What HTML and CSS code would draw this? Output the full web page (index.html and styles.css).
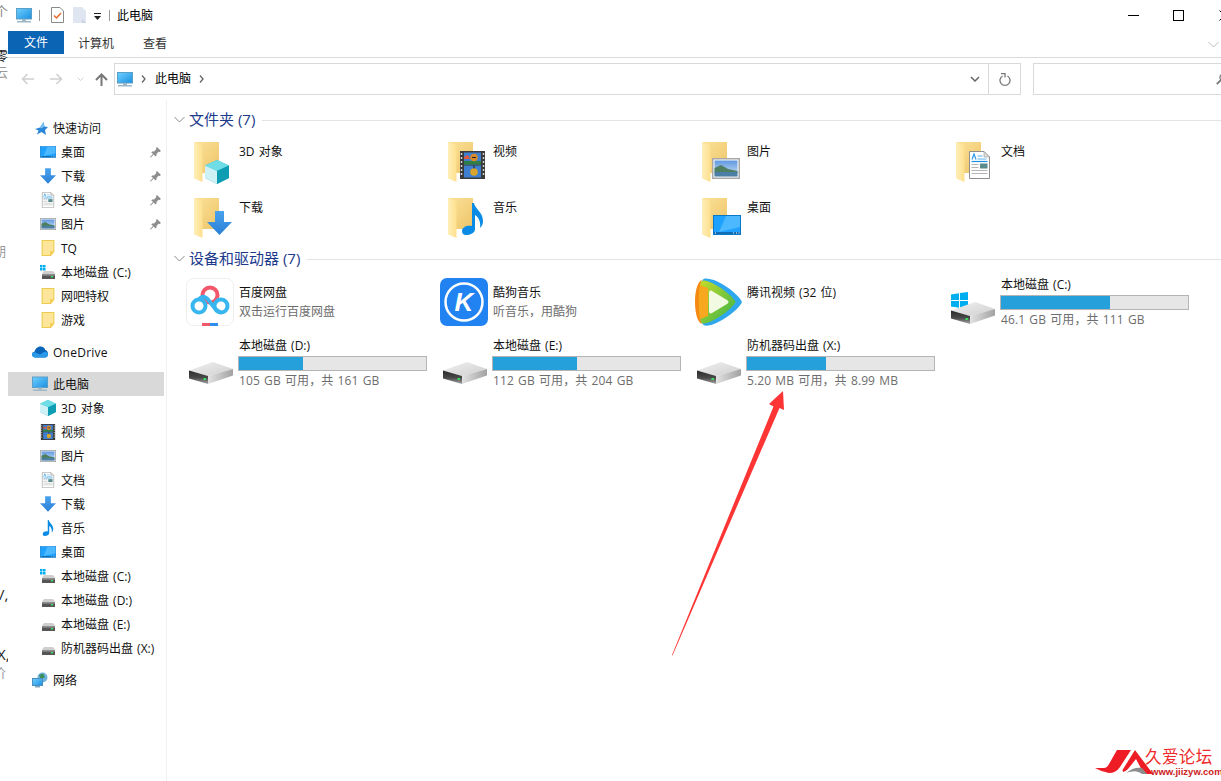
FILE: index.html
```html
<!DOCTYPE html>
<html lang="zh-CN">
<head>
<meta charset="utf-8">
<title>此电脑</title>
<link rel="stylesheet" href="styles.css">
</head>
<body>
<svg class="defs" aria-hidden="true">
  <defs>
    <linearGradient id="gFolder" x1="0" y1="0" x2="1" y2="1"><stop offset="0" stop-color="#fbe29a"/><stop offset="1" stop-color="#eec468"/></linearGradient>
    <linearGradient id="gFront" x1="0" y1="0" x2="1" y2="0"><stop offset="0" stop-color="#ffeeb8"/><stop offset="1" stop-color="#fde08e"/></linearGradient>
    <linearGradient id="gArrow" x1="0" y1="0" x2="0" y2="1"><stop offset="0" stop-color="#4aa3ee"/><stop offset="1" stop-color="#2a7fd6"/></linearGradient>
    <linearGradient id="gDriveTop" x1="0" y1="0" x2="1" y2="1"><stop offset="0" stop-color="#f0f0f0"/><stop offset="1" stop-color="#cfcfcf"/></linearGradient>
    <linearGradient id="gDriveSide" x1="0" y1="0" x2="1" y2="0"><stop offset="0" stop-color="#e2e2e2"/><stop offset="1" stop-color="#a2a2a2"/></linearGradient>
    <linearGradient id="gDriveFront" x1="0" y1="0" x2="0" y2="1"><stop offset="0" stop-color="#2a2a2a"/><stop offset=".55" stop-color="#4a4a4a"/><stop offset="1" stop-color="#a8a8a8"/></linearGradient>
    <linearGradient id="gScreen" x1="0" y1="0" x2="1" y2="1"><stop offset="0" stop-color="#6fd0ff"/><stop offset="1" stop-color="#1c8fe0"/></linearGradient>
    <linearGradient id="gSky" x1="0" y1="0" x2="0" y2="1"><stop offset="0" stop-color="#5f98e0"/><stop offset="1" stop-color="#cfe2f3"/></linearGradient>
    <linearGradient id="gTvGreen" x1="0" y1="0" x2="1" y2="1"><stop offset="0" stop-color="#c5dc2a"/><stop offset="1" stop-color="#36b24a"/></linearGradient>

    <symbol id="folder" viewBox="0 0 26 40">
      <path d="M0 0H25V31H8Z" fill="url(#gFolder)"/>
      <path d="M0 0L8.500 3V40L0 36.500Z" fill="url(#gFront)"/>
    </symbol>
    <symbol id="folder-s" viewBox="0 0 12 15">
      <path d="M.5.500H11.500V11L8.500 14.500H.5Z" fill="#fde59a" stroke="#eecb4c"/>
      <path d="M8.500 14.500V11H11.500" fill="#fbd35f" stroke="#eecb4c"/>
    </symbol>
    <symbol id="desktop" viewBox="0 0 28 20">
      <rect x=".5" y=".5" width="27" height="19" fill="#1ea1ff" stroke="#0a78c8"/>
      <path d="M13 1H27V12L6 17Z" fill="#4cb8ff"/>
      <rect x="1" y="17" width="26" height="2" fill="#0f6db5"/>
      <path d="M2 18h1M20 18h1M23 18h1M25.500 18h1" stroke="#fff" stroke-width="1"/>
    </symbol>
    <symbol id="down" viewBox="0 0 25 24">
      <path d="M8 0H17V11H25L12.500 24L0 11H8Z" fill="url(#gArrow)"/>
    </symbol>
    <symbol id="doc" viewBox="0 0 21 28">
      <path d="M.5.500H15L20.500 6V27.500H.5Z" fill="#fff" stroke="#8e8e8e"/>
      <path d="M15 .5V6H20.500Z" fill="#dcdcdc" stroke="#9a9a9a" stroke-width=".6"/>
      <path d="M3 8.500L5 3L7 8.500" fill="none" stroke="#2f9be4" stroke-width="1.200"/>
      <path d="M8.500 5h5M8.500 8h9" stroke="#55b0ec"/>
      <path d="M2.500 10.500h16" stroke="#1d8fdf" stroke-width="1.200"/>
      <path d="M2.500 13.500h7M2.500 16.500h7M2.500 19.500h16M2.500 22.500h16" stroke="#b5b5b5"/>
      <rect x="11" y="12.500" width="7.500" height="5" fill="#5b8a8a"/>
    </symbol>
    <symbol id="pic" viewBox="0 0 28 21">
      <rect x=".75" y=".75" width="26.500" height="19.500" fill="#fff" stroke="#a8a8a8" stroke-width="1.500"/>
      <rect x="2.500" y="2.500" width="23" height="16" fill="url(#gSky)"/>
      <path d="M2.500 10L9 7L16 11L25.500 13V15H2.500Z" fill="#4f7f62"/>
      <rect x="2.500" y="14" width="23" height="4.500" fill="#4c7fa6"/>
    </symbol>
    <symbol id="cube" viewBox="0 0 24 24">
      <path d="M12 0L24 5.500V18L12 24L0 18V5.500Z" fill="#27b6c9"/>
      <path d="M0 5.500L12 0L24 5.500L12 11Z" fill="#6fdde6"/>
      <path d="M0 5.500L12 11V24L0 18Z" fill="#cdf1f4"/>
      <path d="M12 11L24 5.500V18L12 24Z" fill="#0f9db4"/>
    </symbol>
    <symbol id="film" viewBox="0 0 25 28">
      <rect width="25" height="28" fill="#3a3a3a"/>
      <rect x="4" y="1.500" width="17" height="12" fill="#3e7fd0"/>
      <rect x="4" y="14.500" width="17" height="12" fill="#3e7fd0"/>
      <path d="M4 10h17v3.500H4Z" fill="#2f7f45"/>
      <circle cx="14" cy="6.500" r="3.800" fill="#d98a2a"/>
      <circle cx="14" cy="21" r="3.800" fill="#d9a52a"/>
      <path d="M12 6.500h4M14 14.500v3" stroke="#222"/>
      <path d="M4 6L8 4L10 8H4Z" fill="#e25a3a"/>
      <path d="M1.500 2v24M23.500 2v24" stroke="#cfcfcf" stroke-width="1.500" stroke-dasharray="2 2"/>
    </symbol>
    <symbol id="note" viewBox="0 0 21 32">
      <path d="M10 0H12C13 6 21 9 21 18C21 21 20 23 18 25C19 20 17 14 13 12V26C13 30 8 32 4 32C1 32 0 30 0 28C0 24 5 22 10 23Z" fill="#0a8be6"/>
    </symbol>
    <symbol id="drive" viewBox="0 0 44 22">
      <path d="M0 8.500L24 0L44 7L19 14Z" fill="url(#gDriveTop)"/>
      <path d="M19 14L44 7V13.500L19 22Z" fill="url(#gDriveSide)"/>
      <path d="M0 8.500L19 14V22L0 16.500Z" fill="url(#gDriveFront)"/>
      <rect x="14.500" y="16" width="2.500" height="2" fill="#35e05a"/>
    </symbol>
    <symbol id="win" viewBox="0 0 17 17">
      <path d="M0 2.500L8 1.200V8H0ZM9 1L17 0V8H9ZM0 9H8V15.800L0 14.500ZM9 9H17V17L9 16Z" fill="#00aeef"/>
    </symbol>
    <symbol id="drive-s" viewBox="0 0 16 16">
      <path d="M2 9.500L4 7H13L15 9.500V11H2Z" fill="#cfcfcf"/>
      <rect x="2" y="10.500" width="13" height="4.500" fill="#555"/>
      <rect x="2" y="10.500" width="13" height="1.200" fill="#8d8d8d"/>
      <rect x="11" y="12" width="2" height="1.500" fill="#3fe060"/>
    </symbol>
    <symbol id="win-drive-s" viewBox="0 0 16 16">
      <use href="#drive-s" width="16" height="16"/>
      <path d="M0 1h2.500v2.500H0ZM3 1h2.500v2.500H3ZM0 4h2.500v2.500H0ZM3 4h2.500v2.500H3Z" fill="#00aeef"/>
    </symbol>
    <symbol id="star" viewBox="0 0 13 13">
      <path d="M8.500 0L9.500 4.500L13 5L10 8L11 13L6.500 10L2 12.500L3.500 8.500L0 7L5 5.500Z" fill="#2a86d8"/>
      <path d="M8.500 0L9.500 4.500L6 6.500L5 5.500Z" fill="#7cc0f2"/>
    </symbol>
    <symbol id="cloud" viewBox="0 0 16 11">
      <path d="M3.500 11C1 11 0 9.500 0 8C0 6.500 1 5.500 2.500 5.300C3 2.500 5.500 0 8.500 0C11 0 12.800 1.500 13.300 3.500C15 4 16 5.500 16 7.500C16 9.500 14.800 11 13 11Z" fill="#0a64b8"/>
      <path d="M3.500 11C1 11 0 9.500 0 8C0 6.500 1.500 5.500 3.500 6L8 8L12 5.500C14 5 16 6 16 8C16 10 14.800 11 13 11Z" fill="#2a9ae8"/>
    </symbol>
    <symbol id="pc" viewBox="0 0 16 15">
      <rect x=".5" y=".5" width="15" height="10.500" fill="url(#gScreen)" stroke="#5a9fc8"/>
      <rect x="6" y="11" width="4" height="2" fill="#9ab8c8"/>
      <rect x="1" y="13" width="14" height="1.500" fill="#9fb8c6"/>
    </symbol>
    <symbol id="network" viewBox="0 0 16 16">
      <circle cx="10.500" cy="5.500" r="5" fill="#6fb4e0"/>
      <path d="M7 3L11 1.500L13 5L9 8Z" fill="#3c8f5a"/>
      <rect x=".5" y="6.500" width="10" height="7" fill="url(#gScreen)" stroke="#4a8fc0"/>
      <rect x="3" y="14" width="5" height="1.500" fill="#7fa8c0"/>
    </symbol>
    <symbol id="pin" viewBox="0 0 11 11">
      <path d="M7 0L11 4L9.500 5L8.500 4.700L6.500 7L6.500 8.500L5.500 9.500L3.800 7.500L.8 10.500L0 10L3 7L1.200 5.300L2.200 4.500L4 4.500L6.300 2.200L6 1Z" fill="#8d8d8d"/>
    </symbol>
  </defs>
</svg>

<div class="window">
  <div class="bleed">
    <span class="bleed-item b1">个</span>
    <span class="bleed-item b2">零</span>
    <span class="bleed-item b3">云</span>
    <span class="bleed-item b4">期</span>
    <span class="bleed-item b5">/,</span>
    <span class="bleed-item b6">X,</span>
    <span class="bleed-item b7">价</span>
  </div>

  <header class="titlebar">
    <svg class="qa qa-pc" width="16" height="15"><use href="#pc" width="16" height="15"/></svg>
    <i class="qa-sep"></i>
    <svg class="qa qa-check" width="13" height="16" viewBox="0 0 13 16">
      <path d="M.5.500H9L12.500 4V15.500H.5Z" fill="#fff" stroke="#8a8a8a"/>
      <path d="M3 8.500L5.500 11L10 6" fill="none" stroke="#e8682a" stroke-width="1.500"/>
    </svg>
    <svg class="qa qa-blank" width="13" height="16" viewBox="0 0 13 16">
      <path d="M0 0H9L13 4V16H0Z" fill="#dfe6f2"/>
      <path d="M9 12V16H13Z" fill="#c8d2e2"/>
    </svg>
    <svg class="qa qa-drop" width="9" height="8" viewBox="0 0 9 8">
      <path d="M1 .5h7" stroke="#222"/>
      <path d="M1 3H8L4.500 7Z" fill="#222"/>
    </svg>
    <i class="qa-sep qa-sep2"></i>
    <span class="title-text">此电脑</span>
    <div class="win-controls">
      <svg class="wc wc-min" width="11" height="11"><path d="M0 5.500H11" stroke="#000"/></svg>
      <svg class="wc wc-max" width="11" height="11"><rect x=".5" y=".5" width="10" height="10" fill="none" stroke="#000"/></svg>
      <svg class="wc wc-close" width="11" height="11"><path d="M.5.500L10.500 10.500M10.500.500L.5 10.500" stroke="#000"/></svg>
    </div>
  </header>

  <nav class="tabs">
    <span class="tab tab-file">文件</span>
    <span class="tab tab-calc">计算机</span>
    <span class="tab tab-view">查看</span>
    <svg class="ribbon-toggle" width="11" height="7" viewBox="0 0 11 7"><path d="M.5 1L5.500 6L10.500 1" fill="none" stroke="#bdbdbd"/></svg>
  </nav>

  <div class="addressrow">
    <div class="navbtns">
      <svg class="nb nb-back" width="13" height="12" viewBox="0 0 13 12"><path d="M13 6H2M6.500 1L1.500 6L6.500 11" fill="none" stroke="#cfcfcf" stroke-width="1.500"/></svg>
      <svg class="nb nb-fwd" width="13" height="12" viewBox="0 0 13 12"><path d="M0 6H11M6.500 1L11.500 6L6.500 11" fill="none" stroke="#cfcfcf" stroke-width="1.500"/></svg>
      <svg class="nb nb-drop" width="7" height="5" viewBox="0 0 7 5"><path d="M.5.500L3.500 3.500L6.500.5" fill="none" stroke="#d0d0d0"/></svg>
      <svg class="nb nb-up" width="13" height="13" viewBox="0 0 13 13"><path d="M6.500 13V2M1 7L6.500 1.500L12 7" fill="none" stroke="#777" stroke-width="2"/></svg>
    </div>
    <div class="addr">
      <svg class="addr-pc" width="16" height="15"><use href="#pc" width="16" height="15"/></svg>
      <svg class="crumb" width="5" height="8" viewBox="0 0 5 8"><path d="M1 .5L4 4L1 7.500" fill="none" stroke="#666" stroke-width="1.300"/></svg>
      <span class="addr-text">此电脑</span>
      <svg class="crumb" width="5" height="8" viewBox="0 0 5 8"><path d="M1 .5L4 4L1 7.500" fill="none" stroke="#666" stroke-width="1.300"/></svg>
      <span class="addr-fill"></span>
      <svg class="addr-drop" width="10" height="6" viewBox="0 0 10 6"><path d="M1 1L5 5L9 1" fill="none" stroke="#666" stroke-width="1.500"/></svg>
      <span class="addr-refresh">
        <svg width="12" height="13" viewBox="0 0 12 13"><path d="M3.500 3A5 5 0 1 0 8.500 3" fill="none" stroke="#777" stroke-width="1.300"/><path d="M2 .5H6V4.500" fill="none" stroke="#777" stroke-width="1.300"/></svg>
      </span>
    </div>
    <div class="search">
      <svg width="12" height="12" viewBox="0 0 12 12"><circle cx="7.500" cy="4.500" r="3.500" fill="none" stroke="#777" stroke-width="1.300"/><path d="M5 7L.8 11.200" stroke="#777" stroke-width="1.800"/></svg>
    </div>
  </div>

  <div class="content">
    <aside class="sidebar">
      <div class="row l1"><svg class="ico"><use href="#star" x="3" y="2" width="13" height="13"/></svg><span>快速访问</span></div>
      <div class="row l2"><svg class="ico"><use href="#desktop" width="16" height="16"/></svg><span>桌面</span><svg class="pin"><use href="#pin" width="11" height="11"/></svg></div>
      <div class="row l2"><svg class="ico"><use href="#down" width="16" height="16"/></svg><span>下载</span><svg class="pin"><use href="#pin" width="11" height="11"/></svg></div>
      <div class="row l2"><svg class="ico"><use href="#doc" width="16" height="16"/></svg><span>文档</span><svg class="pin"><use href="#pin" width="11" height="11"/></svg></div>
      <div class="row l2"><svg class="ico"><use href="#pic" width="16" height="16"/></svg><span>图片</span><svg class="pin"><use href="#pin" width="11" height="11"/></svg></div>
      <div class="row l2"><svg class="ico"><use href="#folder-s" width="16" height="16"/></svg><span>TQ</span></div>
      <div class="row l2"><svg class="ico"><use href="#win-drive-s" width="16" height="16"/></svg><span>本地磁盘 (C:)</span></div>
      <div class="row l2"><svg class="ico"><use href="#folder-s" width="16" height="16"/></svg><span>网吧特权</span></div>
      <div class="row l2"><svg class="ico"><use href="#folder-s" width="16" height="16"/></svg><span>游戏</span></div>

      <div class="row l1 spaced"><svg class="ico"><use href="#cloud" width="16" height="16"/></svg><span class="wide">OneDrive</span></div>

      <div class="row l1 spaced selected"><svg class="ico"><use href="#pc" width="16" height="16"/></svg><span>此电脑</span></div>
      <div class="row l2"><svg class="ico"><use href="#cube" width="16" height="16"/></svg><span>3D 对象</span></div>
      <div class="row l2"><svg class="ico"><use href="#film" width="16" height="16"/></svg><span>视频</span></div>
      <div class="row l2"><svg class="ico"><use href="#pic" width="16" height="16"/></svg><span>图片</span></div>
      <div class="row l2"><svg class="ico"><use href="#doc" width="16" height="16"/></svg><span>文档</span></div>
      <div class="row l2"><svg class="ico"><use href="#down" width="16" height="16"/></svg><span>下载</span></div>
      <div class="row l2"><svg class="ico"><use href="#note" width="16" height="16"/></svg><span>音乐</span></div>
      <div class="row l2"><svg class="ico"><use href="#desktop" width="16" height="16"/></svg><span>桌面</span></div>
      <div class="row l2"><svg class="ico"><use href="#win-drive-s" width="16" height="16"/></svg><span>本地磁盘 (C:)</span></div>
      <div class="row l2"><svg class="ico"><use href="#drive-s" width="16" height="16"/></svg><span>本地磁盘 (D:)</span></div>
      <div class="row l2"><svg class="ico"><use href="#drive-s" width="16" height="16"/></svg><span>本地磁盘 (E:)</span></div>
      <div class="row l2"><svg class="ico"><use href="#drive-s" width="16" height="16"/></svg><span>防机器码出盘 (X:)</span></div>

      <div class="row l1 spaced"><svg class="ico"><use href="#network" width="16" height="16"/></svg><span>网络</span></div>
    </aside>

    <main class="main">
      <section class="group">
        <h2 class="group-head">
          <svg class="chev" width="11" height="7" viewBox="0 0 11 7"><path d="M.5 1L5.500 6L10.500 1" fill="none" stroke="#8a8a8a"/></svg>
          <span>文件夹 (7)</span><i class="head-line"></i>
        </h2>
        <div class="grid folders">
          <div class="tile"><svg class="big"><use href="#folder" x="8" y="5" width="26" height="40"/><use href="#cube" x="19" y="23" width="24" height="24"/></svg><div class="info"><div class="name">3D 对象</div></div></div>
          <div class="tile"><svg class="big"><use href="#folder" x="8" y="5" width="26" height="40"/><use href="#film" x="20" y="14" width="25" height="28"/></svg><div class="info"><div class="name">视频</div></div></div>
          <div class="tile"><svg class="big"><use href="#folder" x="8" y="5" width="26" height="40"/><use href="#pic" x="18" y="21" width="28" height="21"/></svg><div class="info"><div class="name">图片</div></div></div>
          <div class="tile"><svg class="big"><use href="#folder" x="8" y="5" width="26" height="40"/><use href="#doc" x="21" y="14" width="21" height="28"/></svg><div class="info"><div class="name">文档</div></div></div>
          <div class="tile"><svg class="big"><use href="#folder" x="8" y="5" width="26" height="40"/><use href="#down" x="21" y="18" width="25" height="24"/></svg><div class="info"><div class="name">下载</div></div></div>
          <div class="tile"><svg class="big"><use href="#folder" x="8" y="5" width="26" height="40"/><use href="#note" x="22" y="10" width="21" height="32"/></svg><div class="info"><div class="name">音乐</div></div></div>
          <div class="tile"><svg class="big"><use href="#folder" x="8" y="5" width="26" height="40"/><use href="#desktop" x="19" y="22" width="28" height="20"/></svg><div class="info"><div class="name">桌面</div></div></div>
        </div>
      </section>

      <section class="group">
        <h2 class="group-head">
          <svg class="chev" width="11" height="7" viewBox="0 0 11 7"><path d="M.5 1L5.500 6L10.500 1" fill="none" stroke="#8a8a8a"/></svg>
          <span>设备和驱动器 (7)</span><i class="head-line"></i>
        </h2>
        <div class="grid drives">
          <div class="tile">
            <svg class="app" viewBox="0 0 48 48">
              <rect x=".5" y=".5" width="47" height="47" rx="7" fill="#fff" stroke="#eeeeee"/>
              <circle cx="24" cy="17" r="7.500" fill="none" stroke="#f2586a" stroke-width="4"/>
              <circle cx="13" cy="28" r="6.500" fill="none" stroke="#37b6f0" stroke-width="4"/>
              <circle cx="35" cy="28" r="6.500" fill="none" stroke="#37b6f0" stroke-width="4"/>
              <path d="M13 21.500Q18 15 24 24Q30 33 35 34.500" fill="none" stroke="#37b6f0" stroke-width="4"/>
              <rect x="16" y="45" width="8" height="3" fill="#f2586a"/>
              <rect x="24" y="45" width="8" height="3" fill="#2f8cf0"/>
            </svg>
            <div class="info pad"><div class="name">百度网盘</div><div class="sub sub-app">双击运行百度网盘</div></div>
          </div>
          <div class="tile">
            <svg class="app" viewBox="0 0 48 48">
              <rect width="48" height="48" rx="7" fill="#2183f2"/>
              <circle cx="24" cy="24" r="18.500" fill="none" stroke="#fff" stroke-width="2.500"/>
              <text x="24" y="33" class="app-k">K</text>
            </svg>
            <div class="info pad"><div class="name">酷狗音乐</div><div class="sub sub-app">听音乐，用酷狗</div></div>
          </div>
          <div class="tile">
            <svg class="app" viewBox="0 0 48 48">
              <path d="M8 2C4 3 1 12 1 24S4 45 8 46C5 40 5 8 8 2Z" fill="#f58a12"/>
              <path d="M8 3C10-1 14 1 20 2C32 7 42 15 47 22C48 24 48 25 47 26C42 33 32 41 20 46C14 48 10 49 8 45C5 38 5 10 8 3Z" fill="#2fa7ee"/>
              <path d="M7 4C5 12 5 36 7 44C9 47 13 45 18 43C28 38 37 31 41 25C42 24 42 24 41 23C37 17 28 10 18 5C13 3 9 1 7 4Z" fill="url(#gTvGreen)"/>
              <path d="M6 7C4.500 14 4.500 34 6 41L14 38V10Z" fill="#f7a81e"/>
              <path d="M15 15C15 13 16 12 18 13L33 22C35 23 35 25 33 26L18 35C16 36 15 35 15 33Z" fill="#f3fae2"/>
            </svg>
            <div class="info pad"><div class="name">腾讯视频 (32 位)</div></div>
          </div>
          <div class="tile">
            <svg class="big"><use href="#win" x="3" y="16" width="17" height="17"/><use href="#drive" x="3" y="26" width="44" height="22"/></svg>
            <div class="info"><div class="name">本地磁盘 (C:)</div><div class="bar"><div class="fill" style="width:58.500%"></div></div><div class="sub">46.1 GB 可用，共 111 GB</div></div>
          </div>
          <div class="tile">
            <svg class="big"><use href="#drive" x="3" y="25" width="44" height="22"/></svg>
            <div class="info"><div class="name">本地磁盘 (D:)</div><div class="bar"><div class="fill" style="width:34%"></div></div><div class="sub">105 GB 可用，共 161 GB</div></div>
          </div>
          <div class="tile">
            <svg class="big"><use href="#drive" x="3" y="25" width="44" height="22"/></svg>
            <div class="info"><div class="name">本地磁盘 (E:)</div><div class="bar"><div class="fill" style="width:45%"></div></div><div class="sub">112 GB 可用，共 204 GB</div></div>
          </div>
          <div class="tile">
            <svg class="big"><use href="#drive" x="3" y="25" width="44" height="22"/></svg>
            <div class="info"><div class="name">防机器码出盘 (X:)</div><div class="bar"><div class="fill" style="width:42%"></div></div><div class="sub">5.20 MB 可用，共 8.99 MB</div></div>
          </div>
        </div>
      </section>
    </main>
  </div>

  <svg class="arrow" width="1221" height="781" viewBox="0 0 1221 781" aria-hidden="true">
    <path d="M783 391L784 410L779.500 408L672.500 655.500L672 655L773.500 406.500L769 404Z" fill="#fd3535"/>
  </svg>

  <div class="logo">
    <svg class="logo-mark" width="58" height="30" viewBox="0 0 58 30">
      <path d="M22 3H36L25 20Q21 26 14 26Q7 25 0 21H9Q12 21 14 17Z" fill="#ee1c25"/>
      <path d="M40 3L58 27H49L41 12L33 22Q30 25 28 25L27.500 23Z" fill="#ee1c25"/>
      <path d="M31 26C37 21 42 20 47 21L52 27H47C42 23 37 24 31 26Z" fill="#8c8c8c"/>
    </svg>
    <div class="logo-text">
      <div class="logo-cn">久爱论坛</div>
      <div class="logo-url">www.jiizyw.com</div>
    </div>
  </div>
</div>
</body>
</html>
```

FILE: styles.css
```css
* { box-sizing: border-box; }

html, body {
  margin: 0;
  padding: 0;
  background: #fff;
}

body {
  font-family: "Open Sans", "Noto Sans CJK SC", sans-serif;
  font-size: 12px;
  line-height: 16px;
  word-spacing: 1px;
  color: #000;
  overflow: hidden;
}

.defs { position: absolute; width: 0; height: 0; }

.window {
  position: relative;
  width: 1221px;
  height: 781px;
  overflow: hidden;
  display: flex;
  flex-direction: column;
  padding-left: 8px;
}

/* fragments of the window behind */
.bleed { position: absolute; left: 0; top: 0; width: 8px; height: 781px; overflow: hidden; }
.bleed-item { position: absolute; left: -5px; color: #222; font-size: 13px; }
.b1 { top: 3px; color: #888; }
.b2 { top: 47px; }
.b3 { top: 64px; color: #999; }
.b4 { top: 243px; color: #999; left: -7px; }
.b5 { top: 586px; left: -1px; font-size: 15px; }
.b6 { top: 646px; left: -3px; font-size: 15px; }
.b7 { top: 664px; color: #999; left: -7px; }

/* title bar */
.titlebar {
  height: 30px;
  flex: none;
  display: flex;
  align-items: center;
  padding-left: 8px;
}
.qa { flex: none; display: block; }
.qa-pc { margin-right: 7px; }
.qa-sep { width: 1px; height: 11px; background: #9a9a9a; flex: none; }
.qa-check { margin-left: 11px; }
.qa-blank { margin-left: 9px; }
.qa-drop { margin-left: 7px; margin-top: 3px; }
.qa-sep2 { margin-left: 7px; }
.title-text { margin-left: 7px; padding-top: 2px; }
.win-controls {
  margin-left: auto;
  display: flex;
  align-items: center;
  margin-right: -9px;
}
.wc { flex: none; display: block; }
.wc-min { margin-right: 34px; }
.wc-max { margin-right: 35px; }
.wc-close { margin-right: 0; }

/* tabs */
.tabs {
  height: 28px;
  flex: none;
  display: flex;
  align-items: flex-start;
  border-bottom: 1px solid #dadada;
  padding-top: 1px;
}
.tab { display: block; height: 23px; line-height: 26px; text-align: center; color: #333; }
.tab-file { width: 56px; background: #0b64b4; color: #fff; line-height: 24px; }
.tab-calc { width: 64px; }
.tab-view { width: 54px; }
.ribbon-toggle { margin-left: auto; margin-top: 10px; margin-right: 2px; }

/* address row */
.addressrow {
  height: 42px;
  flex: none;
  display: flex;
  align-items: flex-start;
  padding-top: 5px;
}
.navbtns {
  width: 106px;
  height: 32px;
  flex: none;
  display: flex;
  align-items: center;
  padding-left: 13px;
}
.nb { flex: none; display: block; }
.nb-fwd { margin-left: 16px; }
.nb-drop { margin-left: 14px; }
.nb-up { margin-left: 11px; }

.addr {
  width: 907px;
  height: 32px;
  flex: none;
  border: 1px solid #d9d9d9;
  display: flex;
  align-items: center;
  padding-left: 2px;
}
.addr-pc { flex: none; }
.crumb { flex: none; margin-left: 8px; }
.addr-text { margin-left: 9px; }
.addr-fill { flex: 1; }
.addr-drop { flex: none; margin-right: 8px; }
.addr-refresh {
  width: 32px;
  height: 30px;
  flex: none;
  border-left: 1px solid #d9d9d9;
  display: flex;
  align-items: center;
  justify-content: center;
}
.search {
  flex: none;
  width: 220px;
  height: 32px;
  margin-left: 12px;
  border: 1px solid #d9d9d9;
  display: flex;
  align-items: center;
  padding-left: 182px;
}

/* content */
.content { flex: 1; display: flex; min-height: 0; }

.sidebar {
  width: 159px;
  flex: none;
  padding-top: 16px;
  border-right: 1px solid #f0f0f0;
}
.row {
  position: relative;
  width: 156px;
  height: 24px;
  display: flex;
  align-items: center;
  white-space: nowrap;
  color: #111;
}
.row span { padding-top: 2px; }
.row .wide { letter-spacing: .25px; }
.row.l1 { padding-left: 24px; }
.row.l2 { padding-left: 32px; }
.row.spaced { margin-top: 8px; }
.row.selected { background: #d9d9d9; }
.ico { width: 16px; height: 16px; flex: none; margin-right: 5px; display: block; }
.pin { width: 11px; height: 11px; position: absolute; right: 3px; top: 7px; }

.main {
  flex: 1;
  min-width: 0;
  padding: 10px 0 0 7px;
}
.group-head {
  margin: 0;
  height: 18px;
  display: flex;
  align-items: center;
  font-size: 15px;
  font-weight: 400;
  line-height: 18px;
  word-spacing: 0;
  color: #1b3a8c;
}
.chev { flex: none; margin-right: 4px; }
.head-line { flex: 1; height: 1px; background: #e3e3e3; margin-left: 7px; margin-top: 2px; }

.grid {
  display: grid;
  grid-template-columns: repeat(4, 254px);
  margin-left: 12px;
}
.folders { grid-auto-rows: 56px; padding-top: 9px; }
.drives { grid-auto-rows: 61px; padding-top: 9px; }

.tile { display: flex; align-items: flex-start; min-width: 0; }
.big { width: 48px; height: 48px; flex: none; display: block; margin-right: 5px; }
.app { width: 48px; height: 48px; flex: none; display: block; margin: 2px 5px 0 0; }
.app-k { font-family: "Liberation Sans", sans-serif; font-size: 26px; font-weight: 700; font-style: italic; fill: #fff; text-anchor: middle; }

.info { width: 189px; flex: none; white-space: nowrap; }
.folders .info { padding-top: 6px; }
.info.pad { padding-top: 8px; }
.name { color: #111; padding-top: 1px; }
.sub { color: #6d6d6d; margin-top: 2px; letter-spacing: .1px; }
.sub-app { margin-top: 3px; letter-spacing: 0; }
.bar {
  width: 189px;
  height: 15px;
  margin: 2px 0 0 -1px;
  border: 1px solid #b5b5b5;
  background: #e6e6e6;
}
.fill { height: 100%; background: #26a0da; }

/* overlay annotation */
.arrow { position: absolute; left: 0; top: 0; pointer-events: none; }

.logo {
  position: absolute;
  left: 1095px;
  top: 747px;
  display: flex;
}
.logo-mark { flex: none; display: block; }
.logo-text { margin-left: -8px; position: relative; }
.logo-cn { color: #ee2a2a; font-size: 16.500px; line-height: 20px; letter-spacing: .4px; white-space: nowrap; }
.logo-url { color: #c22; font-family: "Liberation Sans", sans-serif; font-size: 9.500px; font-weight: 700; line-height: 10px; margin-left: 6px; white-space: nowrap; }
```
